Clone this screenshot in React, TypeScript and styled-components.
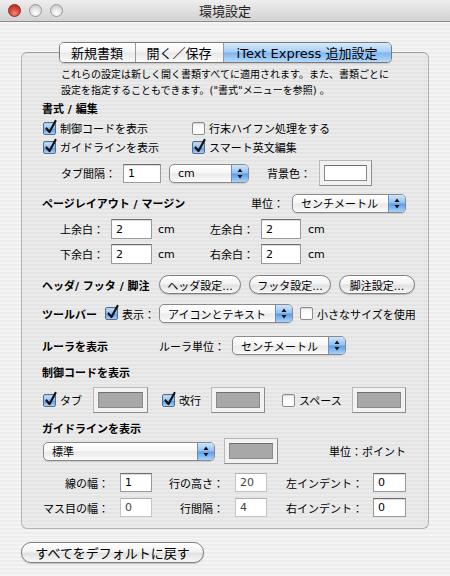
import React from 'react'
import styled, { createGlobalStyle, css } from 'styled-components'

const GlobalStyle = createGlobalStyle`
  html, body {
    margin: 0;
    padding: 0;
  }
  body {
    font-family: "DejaVu Sans", "Noto Sans CJK JP", sans-serif;
    font-size: 11px;
    color: #000;
  }
`

const pinstripe = css`
  background: repeating-linear-gradient(180deg, #ededed 0px, #ededed 2px, #f4f4f4 2px, #f4f4f4 4px);
`

const Window = styled.div`
  width: 450px;
  height: 576px;
  overflow: hidden;
  ${pinstripe}
`

const TitleBar = styled.div`
  height: 21px;
  display: grid;
  grid-template-columns: 1fr auto 1fr;
  align-items: center;
  padding: 0 8px;
  border-bottom: 1px solid #8e8e8e;
  background: linear-gradient(180deg, #eeeeee 0%, #dedede 55%, #d2d2d2 100%);
`

const Lights = styled.div`
  display: flex;
  gap: 8px;
`

const Light = styled.span<{ $red?: boolean }>`
  width: 13px;
  height: 13px;
  border-radius: 50%;
  box-sizing: border-box;
  border: 1px solid ${({ $red }) => ($red ? '#8a2a22' : '#9a9a9a')};
  background: ${({ $red }) =>
    $red
      ? 'radial-gradient(circle at 50% 75%, #f08a7e 0%, #d84a3c 45%, #a82418 100%)'
      : 'radial-gradient(circle at 50% 75%, #ffffff 0%, #e2e2e2 50%, #bdbdbd 100%)'};
`

const Title = styled.div`
  font-family: "Noto Sans CJK JP", sans-serif;
  font-size: 13px;
  color: #222;
`

const Body = styled.div`
  padding: 20px 21px 0 21px;
  display: flex;
  flex-direction: column;
`

const TabBar = styled.div`
  align-self: center;
  display: flex;
  height: 21px;
  box-sizing: border-box;
  border: 1px solid #7b7b7b;
  border-radius: 5px;
  overflow: hidden;
  position: relative;
  z-index: 1;
  box-shadow: 0 1px 1px rgba(0, 0, 0, 0.15);
`

const Tab = styled.div<{ $active?: boolean; $w: number }>`
  width: ${({ $w }) => $w}px;
  display: flex;
  align-items: center;
  justify-content: center;
  font-size: 13px;
  font-family: "DejaVu Sans", "Noto Sans CJK JP", sans-serif;
  & + & {
    border-left: 1px solid #9a9a9a;
  }
  background: ${({ $active }) =>
    $active
      ? 'linear-gradient(180deg, #d8eafc 0%, #a6cdf5 48%, #7db5ef 52%, #b5dafa 100%)'
      : 'linear-gradient(180deg, #ffffff 0%, #f4f4f4 48%, #e8e8e8 52%, #fafafa 100%)'};
`

const Group = styled.div`
  margin-top: -11px;
  height: 477px;
  box-sizing: border-box;
  border: 1px solid #b3b3b3;
  border-top-color: #a0a0a0;
  border-radius: 6px;
  background: rgba(0, 0, 0, 0.035);
  padding-top: 13px;
  display: flex;
  flex-direction: column;
`

const Row = styled.div<{ $h: number; $mt: number; $pl: number }>`
  display: flex;
  align-items: center;
  height: ${({ $h }) => $h}px;
  margin-top: ${({ $mt }) => $mt}px;
  padding-left: ${({ $pl }) => $pl}px;
  flex: none;
`

const Slot = styled.div<{ $w: number; $right?: boolean }>`
  width: ${({ $w }) => $w}px;
  flex: none;
  display: flex;
  align-items: center;
  justify-content: ${({ $right }) => ($right ? 'flex-end' : 'flex-start')};
  padding-right: ${({ $right }) => ($right ? '11px' : '0')};
  box-sizing: border-box;
`

const Desc = styled.div`
  font-size: 10px;
  line-height: 16px;
  white-space: nowrap;
  margin-top: 1px;
  padding-left: 39px;
`

const Heading = styled.span`
  font-weight: bold;
  white-space: nowrap;
`

const Label = styled.span<{ $muted?: boolean }>`
  white-space: nowrap;
  color: ${({ $muted }) => ($muted ? '#333' : '#000')};
`

const CheckWrap = styled.label`
  display: flex;
  align-items: center;
  gap: 4px;
  white-space: nowrap;
`

const Box = styled.span<{ $on?: boolean }>`
  position: relative;
  width: 13px;
  height: 13px;
  box-sizing: border-box;
  border-radius: 2px;
  flex: none;
  border: 1px solid ${({ $on }) => ($on ? '#4f6f99' : '#8c8c8c')};
  background: ${({ $on }) =>
    $on
      ? 'linear-gradient(180deg, #d2e6fb 0%, #8bbcee 50%, #5e9ae0 55%, #a6d0f7 100%)'
      : 'linear-gradient(180deg, #f2f2f2 0%, #ffffff 60%, #ffffff 100%)'};
  box-shadow: inset 0 1px 1px rgba(0, 0, 0, 0.12);
  svg {
    position: absolute;
    left: 1px;
    top: -3px;
    overflow: visible;
  }
`

const Input = styled.div<{ $w: number; $h?: number; $disabled?: boolean }>`
  width: ${({ $w }) => $w}px;
  height: ${({ $h }) => $h ?? 19}px;
  box-sizing: border-box;
  background: #fff;
  border: 1px solid ${({ $disabled }) => ($disabled ? '#c4c4c4' : '#9a9a9a')};
  border-top-color: ${({ $disabled }) => ($disabled ? '#b0b0b0' : '#6e6e6e')};
  box-shadow: ${({ $disabled }) => ($disabled ? 'none' : 'inset 0 1px 1px rgba(0,0,0,0.15)')};
  display: flex;
  align-items: center;
  padding-left: 4px;
  font-size: 11px;
  color: ${({ $disabled }) => ($disabled ? '#444' : '#000')};
`

const PopupBox = styled.div<{ $w: number }>`
  width: ${({ $w }) => $w}px;
  height: 19px;
  box-sizing: border-box;
  border: 1px solid #8a8a8a;
  border-radius: 5px;
  overflow: hidden;
  display: flex;
  background: linear-gradient(180deg, #ffffff 0%, #f6f6f6 48%, #e9e9e9 52%, #fbfbfb 100%);
  box-shadow: 0 1px 1px rgba(0, 0, 0, 0.12);
`

const PopupText = styled.div`
  flex: 1;
  display: flex;
  align-items: center;
  padding-left: 8px;
  white-space: nowrap;
`

const PopupArrows = styled.div`
  width: 16px;
  flex: none;
  border-left: 1px solid #6f8fb8;
  display: flex;
  align-items: center;
  justify-content: center;
  background: linear-gradient(180deg, #cfe5fb 0%, #8fc0f2 48%, #5b9ce6 52%, #a7d3fb 100%);
`

const Well = styled.div<{ $w: number; $h: number; $swatch: string }>`
  width: ${({ $w }) => $w}px;
  height: ${({ $h }) => $h}px;
  box-sizing: border-box;
  border: 1px solid #8d8d8d;
  border-top-color: #b8b8b8;
  border-left-color: #b8b8b8;
  background: #f2f2f2;
  padding: 4px;
  flex: none;
  & > span {
    display: block;
    width: 100%;
    height: 100%;
    box-sizing: border-box;
    border: 1px solid #8a8a8a;
    border-top-color: #6f6f6f;
    background: ${({ $swatch }) => $swatch};
  }
`

const PushButton = styled.div<{ $w: number; $h?: number; $big?: boolean }>`
  width: ${({ $w }) => $w}px;
  height: ${({ $h }) => $h ?? 19}px;
  box-sizing: border-box;
  border: 1px solid #7f7f7f;
  border-radius: 10px;
  display: flex;
  align-items: center;
  justify-content: center;
  white-space: nowrap;
  font-size: ${({ $big }) => ($big ? 13 : 11)}px;
  background: linear-gradient(180deg, #ffffff 0%, #f3f3f3 45%, #e2e2e2 55%, #f7f7f7 100%);
  box-shadow: 0 1px 1px rgba(0, 0, 0, 0.2);
`

const Footer = styled.div`
  margin-top: 13px;
`

function Check({ on, children }: { on?: boolean; children?: React.ReactNode }) {
  return (
    <CheckWrap>
      <Box $on={on}>
        {on && (
          <svg width="12" height="14" viewBox="0 0 12 14">
            <path d="M1.5 8.5 L4.5 12 L10.5 1" fill="none" stroke="#111" strokeWidth="2.2" strokeLinecap="round" strokeLinejoin="round" />
          </svg>
        )}
      </Box>
      {children}
    </CheckWrap>
  )
}

function Popup({ w, value }: { w: number; value: string }) {
  return (
    <PopupBox $w={w}>
      <PopupText>{value}</PopupText>
      <PopupArrows>
        <svg width="6" height="11" viewBox="0 0 6 11">
          <path d="M0.5 4 L3 0.5 L5.5 4 Z" fill="#111" />
          <path d="M0.5 7 L3 10.5 L5.5 7 Z" fill="#111" />
        </svg>
      </PopupArrows>
    </PopupBox>
  )
}

export default function App() {
  return (
    <Window>
      <GlobalStyle />
      <TitleBar>
        <Lights>
          <Light $red />
          <Light />
          <Light />
        </Lights>
        <Title>環境設定</Title>
        <div />
      </TitleBar>
      <Body>
        <TabBar>
          <Tab $w={75}>新規書類</Tab>
          <Tab $w={87}>開く／保存</Tab>
          <Tab $w={167} $active>
            iText Express 追加設定
          </Tab>
        </TabBar>
        <Group>
          <Desc>
            これらの設定は新しく開く書類すべてに適用されます。また、書類ごとに
            <br />
            設定を指定することもできます。("書式"メニューを参照) 。
          </Desc>

          <Row $h={16} $mt={1} $pl={20}>
            <Heading>書式 / 編集</Heading>
          </Row>
          <Row $h={18} $mt={3} $pl={21}>
            <Slot $w={149}>
              <Check on>制御コードを表示</Check>
            </Slot>
            <Check>行末ハイフン処理をする</Check>
          </Row>
          <Row $h={18} $mt={1} $pl={21}>
            <Slot $w={149}>
              <Check on>ガイドラインを表示</Check>
            </Slot>
            <Check on>スマート英文編集</Check>
          </Row>
          <Row $h={26} $mt={4} $pl={39}>
            <Slot $w={62}>
              <Label>タブ間隔：</Label>
            </Slot>
            <Slot $w={46}>
              <Input $w={38}>1</Input>
            </Slot>
            <Slot $w={98}>
              <Popup w={80} value="cm" />
            </Slot>
            <Slot $w={52}>
              <Label>背景色：</Label>
            </Slot>
            <Well $w={53} $h={26} $swatch="#ffffff">
              <span />
            </Well>
          </Row>

          <Row $h={20} $mt={7} $pl={20}>
            <Slot $w={209}>
              <Heading>ページレイアウト / マージン</Heading>
            </Slot>
            <Slot $w={41}>
              <Label>単位：</Label>
            </Slot>
            <Popup w={114} value="センチメートル" />
          </Row>
          <Row $h={20} $mt={6} $pl={38}>
            <Slot $w={51}>
              <Label>上余白：</Label>
            </Slot>
            <Slot $w={47}>
              <Input $w={41} $h={20}>2</Input>
            </Slot>
            <Slot $w={52}>
              <Label>cm</Label>
            </Slot>
            <Slot $w={51}>
              <Label>左余白：</Label>
            </Slot>
            <Slot $w={47}>
              <Input $w={40} $h={20}>2</Input>
            </Slot>
            <Label>cm</Label>
          </Row>
          <Row $h={20} $mt={5} $pl={38}>
            <Slot $w={51}>
              <Label>下余白：</Label>
            </Slot>
            <Slot $w={47}>
              <Input $w={41} $h={20}>2</Input>
            </Slot>
            <Slot $w={52}>
              <Label>cm</Label>
            </Slot>
            <Slot $w={51}>
              <Label>右余白：</Label>
            </Slot>
            <Slot $w={47}>
              <Input $w={40} $h={20}>2</Input>
            </Slot>
            <Label>cm</Label>
          </Row>

          <Row $h={19} $mt={11} $pl={20}>
            <Slot $w={117}>
              <Heading>ヘッダ/ フッタ / 脚注</Heading>
            </Slot>
            <Slot $w={90}>
              <PushButton $w={82}>ヘッダ設定...</PushButton>
            </Slot>
            <Slot $w={90}>
              <PushButton $w={82}>フッタ設定...</PushButton>
            </Slot>
            <PushButton $w={76}>脚注設定...</PushButton>
          </Row>

          <Row $h={19} $mt={10} $pl={20}>
            <Slot $w={63}>
              <Heading>ツールバー</Heading>
            </Slot>
            <Slot $w={54}>
              <Check on>表示：</Check>
            </Slot>
            <Slot $w={141}>
              <Popup w={134} value="アイコンとテキスト" />
            </Slot>
            <Check>小さなサイズを使用</Check>
          </Row>

          <Row $h={19} $mt={13} $pl={20}>
            <Slot $w={117}>
              <Heading>ルーラを表示</Heading>
            </Slot>
            <Slot $w={73}>
              <Label>ルーラ単位：</Label>
            </Slot>
            <Popup w={114} value="センチメートル" />
          </Row>

          <Row $h={16} $mt={9} $pl={20}>
            <Heading>制御コードを表示</Heading>
          </Row>
          <Row $h={26} $mt={7} $pl={21}>
            <Slot $w={50}>
              <Check on>タブ</Check>
            </Slot>
            <Slot $w={69}>
              <Well $w={55} $h={26} $swatch="#a8a8a8">
                <span />
              </Well>
            </Slot>
            <Slot $w={49}>
              <Check on>改行</Check>
            </Slot>
            <Slot $w={71}>
              <Well $w={54} $h={26} $swatch="#a8a8a8">
                <span />
              </Well>
            </Slot>
            <Slot $w={70}>
              <Check>スペース</Check>
            </Slot>
            <Well $w={54} $h={26} $swatch="#a8a8a8">
              <span />
            </Well>
          </Row>

          <Row $h={16} $mt={7} $pl={20}>
            <Heading>ガイドラインを表示</Heading>
          </Row>
          <Row $h={26} $mt={2} $pl={21}>
            <Slot $w={181}>
              <Popup w={172} value="標準" />
            </Slot>
            <Slot $w={105}>
              <Well $w={54} $h={26} $swatch="#a8a8a8">
                <span />
              </Well>
            </Slot>
            <Label>単位：ポイント</Label>
          </Row>
          <Row $h={19} $mt={9} $pl={21}>
            <Slot $w={77} $right>
              <Label>線の幅：</Label>
            </Slot>
            <Slot $w={48}>
              <Input $w={32}>1</Input>
            </Slot>
            <Slot $w={67} $right>
              <Label>行の高さ：</Label>
            </Slot>
            <Slot $w={51}>
              <Input $w={32} $disabled>
                20
              </Input>
            </Slot>
            <Slot $w={87}>
              <Label>左インデント：</Label>
            </Slot>
            <Input $w={33}>0</Input>
          </Row>
          <Row $h={19} $mt={6} $pl={21}>
            <Slot $w={77} $right>
              <Label>マス目の幅：</Label>
            </Slot>
            <Slot $w={48}>
              <Input $w={32} $disabled>
                0
              </Input>
            </Slot>
            <Slot $w={67} $right>
              <Label>行間隔：</Label>
            </Slot>
            <Slot $w={51}>
              <Input $w={32} $disabled>
                4
              </Input>
            </Slot>
            <Slot $w={87}>
              <Label>右インデント：</Label>
            </Slot>
            <Input $w={33}>0</Input>
          </Row>
        </Group>
        <Footer>
          <PushButton $w={183} $h={21} $big>
            すべてをデフォルトに戻す
          </PushButton>
        </Footer>
      </Body>
    </Window>
  )
}
